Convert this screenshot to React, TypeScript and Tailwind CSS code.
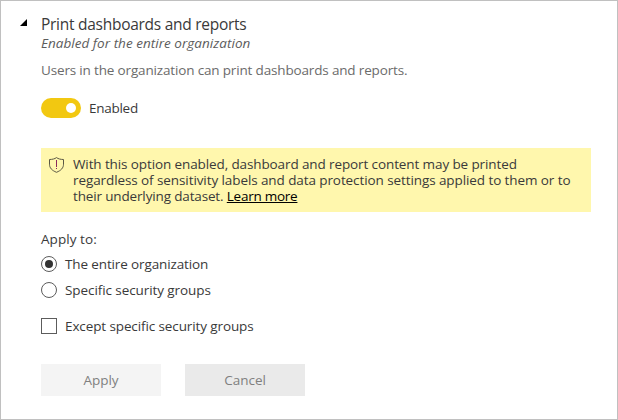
import { useState } from "react";

function Radio({ label, tracking, checked, onSelect }: { label: string; tracking: string; checked: boolean; onSelect: () => void }) {
  return (
    <button role="radio" aria-checked={checked} onClick={onSelect} className="flex h-4 items-center gap-2">
      <span className="flex size-4 items-center justify-center rounded-full border border-[#5c5c5c] bg-white">
        {checked && <span className="size-2 rounded-full bg-[#333333]" />}
      </span>
      <span className={`whitespace-nowrap leading-4 ${tracking}`}>{label}</span>
    </button>
  );
}

export default function App() {
  const [scope, setScope] = useState("all");
  return (
    <div className="h-[420px] w-[618px] overflow-hidden border border-[#c0c0c0] bg-white pl-[19px] pt-3 font-['Open_Sans','Noto_Sans',sans-serif] text-[13.5px] text-[#3a3a3a]">
      <div className="flex">
        <svg className="mt-[6px] h-[8px] w-[8px] shrink-0" viewBox="0 0 8 8" aria-hidden="true">
          <path d="M7 0v7H0z" fill="#000" />
        </svg>
        <div className="ml-[13px] flex w-[550px] flex-col items-start">
          <h2 className="mt-px -mb-px whitespace-nowrap text-[15.5px] leading-5 tracking-[-0.27px]">Print dashboards and reports</h2>
          <p className="whitespace-nowrap italic leading-5 tracking-[0.03px] text-[#5c5c5c]">Enabled for the entire organization</p>
          <p className="mt-[7px] whitespace-nowrap leading-5 tracking-[-0.16px] text-[#6b6b6b]">
            Users in the organization can print dashboards and reports.
          </p>
          <div className="mt-[18px] flex h-5 items-center gap-2">
            <span className="flex h-5 w-10 items-center justify-end rounded-full bg-[#f2c811] pr-[5px]">
              <span className="size-[10px] rounded-full bg-white" />
            </span>
            <span className="mt-px whitespace-nowrap tracking-[-0.27px]">Enabled</span>
          </div>
          <div className="mt-[30px] flex h-16 w-[550px] bg-[#fff7ad] pl-2 pt-2">
            <svg className="mt-px h-4 w-4 shrink-0" viewBox="0 0 16 16" fill="none" aria-hidden="true">
              <path
                d="M7.5 .6C5.800 1.900 3.200 2.500.5 2.500v4.700c0 3.700 2.300 6.200 7 8.100 4.700-1.900 7-4.400 7-8.100V2.500C11.800 2.500 9.200 1.900 7.500.6z"
                stroke="#5a5744"
                strokeWidth="1"
              />
              <path d="M7.500 3v7M7.500 11v1" stroke="#8b2a5c" strokeWidth="1" />
            </svg>
            <p className="ml-2 whitespace-nowrap leading-4">
              <span className="block tracking-[-0.11px]">With this option enabled, dashboard and report content may be printed</span>
              <span className="block tracking-[-0.09px]">regardless of sensitivity labels and data protection settings applied to them or to</span>
              <span className="block tracking-[-0.15px]">
                their underlying dataset. <a href="#" className="tracking-[-0.25px] text-black underline">Learn more</a>
              </span>
            </p>
          </div>
          <p className="mt-[17px] leading-5 tracking-[0.06px]">Apply to:</p>
          <div role="radiogroup" className="mt-[7px] flex flex-col gap-[10px]">
            <Radio label="The entire organization" tracking="tracking-[-0.13px]" checked={scope === "all"} onSelect={() => setScope("all")} />
            <Radio label="Specific security groups" tracking="tracking-[-0.08px]" checked={scope === "groups"} onSelect={() => setScope("groups")} />
          </div>
          <div className="mt-5 flex h-4 items-center gap-2">
            <span role="checkbox" aria-checked="false" className="size-4 border border-[#5c5c5c] bg-white" />
            <span className="whitespace-nowrap leading-4 tracking-[-0.11px]">Except specific security groups</span>
          </div>
          <div className="mt-[30px] flex gap-6">
            <button className="h-8 w-[120px] bg-[#f4f4f4] text-[#808080]">Apply</button>
            <button className="h-8 w-[120px] bg-[#eaeaea] text-[#808080]">Cancel</button>
          </div>
        </div>
      </div>
    </div>
  );
}
